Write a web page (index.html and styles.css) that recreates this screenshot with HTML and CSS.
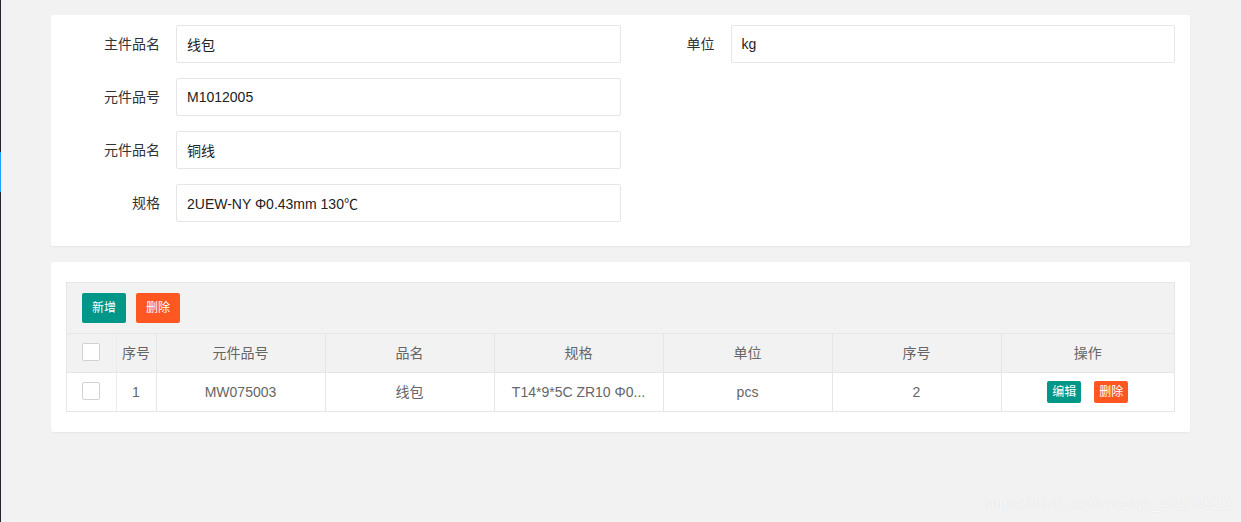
FILE: index.html
```html
<!DOCTYPE html>
<html lang="zh-CN">
<head>
    <meta charset="UTF-8">
    <meta name="viewport" content="width=device-width, initial-scale=1.0">
    <title>元件信息</title>
    <link rel="stylesheet" href="styles.css">
</head>
<body>
    <div class="side">
        <div class="side-active"></div>
    </div>
    <div class="main">
        <div class="card">
            <div class="form">
                <div class="form-item">
                    <label class="form-label">主件品名</label>
                    <input class="input" type="text" value="线包">
                </div>
                <div class="form-item">
                    <label class="form-label">单位</label>
                    <input class="input" type="text" value="kg">
                </div>
                <div class="form-item">
                    <label class="form-label">元件品号</label>
                    <input class="input" type="text" value="M1012005">
                </div>
                <div class="form-item empty"></div>
                <div class="form-item">
                    <label class="form-label">元件品名</label>
                    <input class="input" type="text" value="铜线">
                </div>
                <div class="form-item empty"></div>
                <div class="form-item">
                    <label class="form-label">规格</label>
                    <input class="input" type="text" value="2UEW-NY Φ0.43mm 130℃">
                </div>
            </div>
        </div>

        <div class="card card-table">
            <div class="table-box">
                <div class="toolbar">
                    <button class="btn btn-sm">新增</button>
                    <button class="btn btn-sm btn-danger">删除</button>
                </div>
                <table class="table">
                    <colgroup>
                        <col style="width:49px">
                        <col style="width:40px">
                        <col style="width:169px">
                        <col style="width:169px">
                        <col style="width:169px">
                        <col style="width:169px">
                        <col style="width:169px">
                        <col>
                    </colgroup>
                    <thead>
                        <tr>
                            <th class="check-cell"><span class="checkbox"></span></th>
                            <th class="narrow">序号</th>
                            <th>元件品号</th>
                            <th>品名</th>
                            <th>规格</th>
                            <th>单位</th>
                            <th>序号</th>
                            <th>操作</th>
                        </tr>
                    </thead>
                    <tbody>
                        <tr>
                            <td class="check-cell"><span class="checkbox"></span></td>
                            <td class="narrow">1</td>
                            <td>MW075003</td>
                            <td>线包</td>
                            <td>T14*9*5C ZR10 Φ0...</td>
                            <td>pcs</td>
                            <td>2</td>
                            <td>
                                <button class="btn btn-xs">编辑</button>
                                <button class="btn btn-xs btn-danger">删除</button>
                            </td>
                        </tr>
                    </tbody>
                </table>
            </div>
        </div>
    </div>
    <div class="watermark">https://blog.csdn.net/qq_43434929</div>
</body>
</html>
```

FILE: styles.css
```css
*{
   margin: 0;
   padding: 0;
   box-sizing: border-box;
   outline: none;
}

body{
   font-family: "Liberation Sans", Arial, "Noto Sans CJK SC", sans-serif;
   font-size: 14px;
   color: #333;
   width: 100%;
   height: 100vh;
   background-color: #f2f2f2;
   display: flex;
   overflow: hidden;
}

.side{
   width: 1px;
   height: 100%;
   background-color: #23262e;
   flex-shrink: 0;
}

.side-active{
   margin-top: 152px;
   height: 40px;
   background-color: #1e9fff;
}

.main{
   flex: 1;
   padding: 15px 51px 0 50px;
}

.card{
   background-color: white;
   border-radius: 2px;
   box-shadow: 0 1px 2px 0 rgba(0, 0, 0, 0.05);
   padding: 10px 15px 9px;
   margin-bottom: 16px;
}

.form{
   display: grid;
   grid-template-columns: 1fr 1fr;
}

.form-item{
   display: flex;
   height: 38px;
   margin-bottom: 15px;
}

.form-label{
   width: 110px;
   flex-shrink: 0;
   padding-right: 16px;
   text-align: right;
   line-height: 38px;
   color: #333;
}

.input{
   flex: 1;
   min-width: 0;
   height: 38px;
   border: 1px solid #e6e6e6;
   border-radius: 2px;
   padding-left: 10px;
   font-family: inherit;
   font-size: 14px;
   color: #222;
   background-color: white;
}

.card-table{
   padding: 20px 15px;
}

.table-box{
   border: 1px solid #e6e6e6;
}

.toolbar{
   background-color: #f2f2f2;
   padding: 10px 15px;
   height: 51px;
   border-bottom: 1px solid #e6e6e6;
}

.btn{
   display: inline-block;
   border: none;
   border-radius: 2px;
   background-color: #009688;
   color: white;
   font-family: inherit;
   font-size: 12px;
   cursor: pointer;
}

.btn-sm{
   height: 30px;
   padding: 0 10px;
   line-height: 30px;
}

.btn-sm + .btn-sm{
   margin-left: 6px;
}

.btn-xs{
   height: 22px;
   padding: 0 5px;
   line-height: 22px;
}

.btn-xs + .btn-xs{
   margin-left: 9px;
}

.btn-danger{
   background-color: #ff5722;
}

.table{
   width: 100%;
   table-layout: fixed;
   border-collapse: collapse;
   color: #666;
}

.table th,
.table td{
   height: 38px;
   padding: 0 15px;
   text-align: center;
   font-weight: normal;
   border-left: 1px solid #e6e6e6;
   line-height: 20px;
   white-space: nowrap;
   overflow: hidden;
}

.table td{
   height: 39px;
   background-color: white;
}

.table th:first-child,
.table td:first-child{
   border-left: none;
}

.table th{
   background-color: #f2f2f2;
   border-bottom: 1px solid #e6e6e6;
}

.table .narrow{
   padding: 0;
   border-left-color: #ececec;
}

.check-cell{
   position: relative;
   box-shadow: 3px 0 5px -2px rgba(0, 0, 0, 0.12);
}

.checkbox{
   display: inline-block;
   width: 18px;
   height: 18px;
   margin-top: 3px;
   border: 1px solid #d2d2d2;
   border-radius: 2px;
   background-color: white;
}

.watermark{
   position: absolute;
   right: 10px;
   bottom: 9px;
   font-size: 16px;
   color: rgba(255, 255, 255, 0.8);
   text-shadow: 0 0 1px rgba(0, 0, 0, 0.12);
}
```
